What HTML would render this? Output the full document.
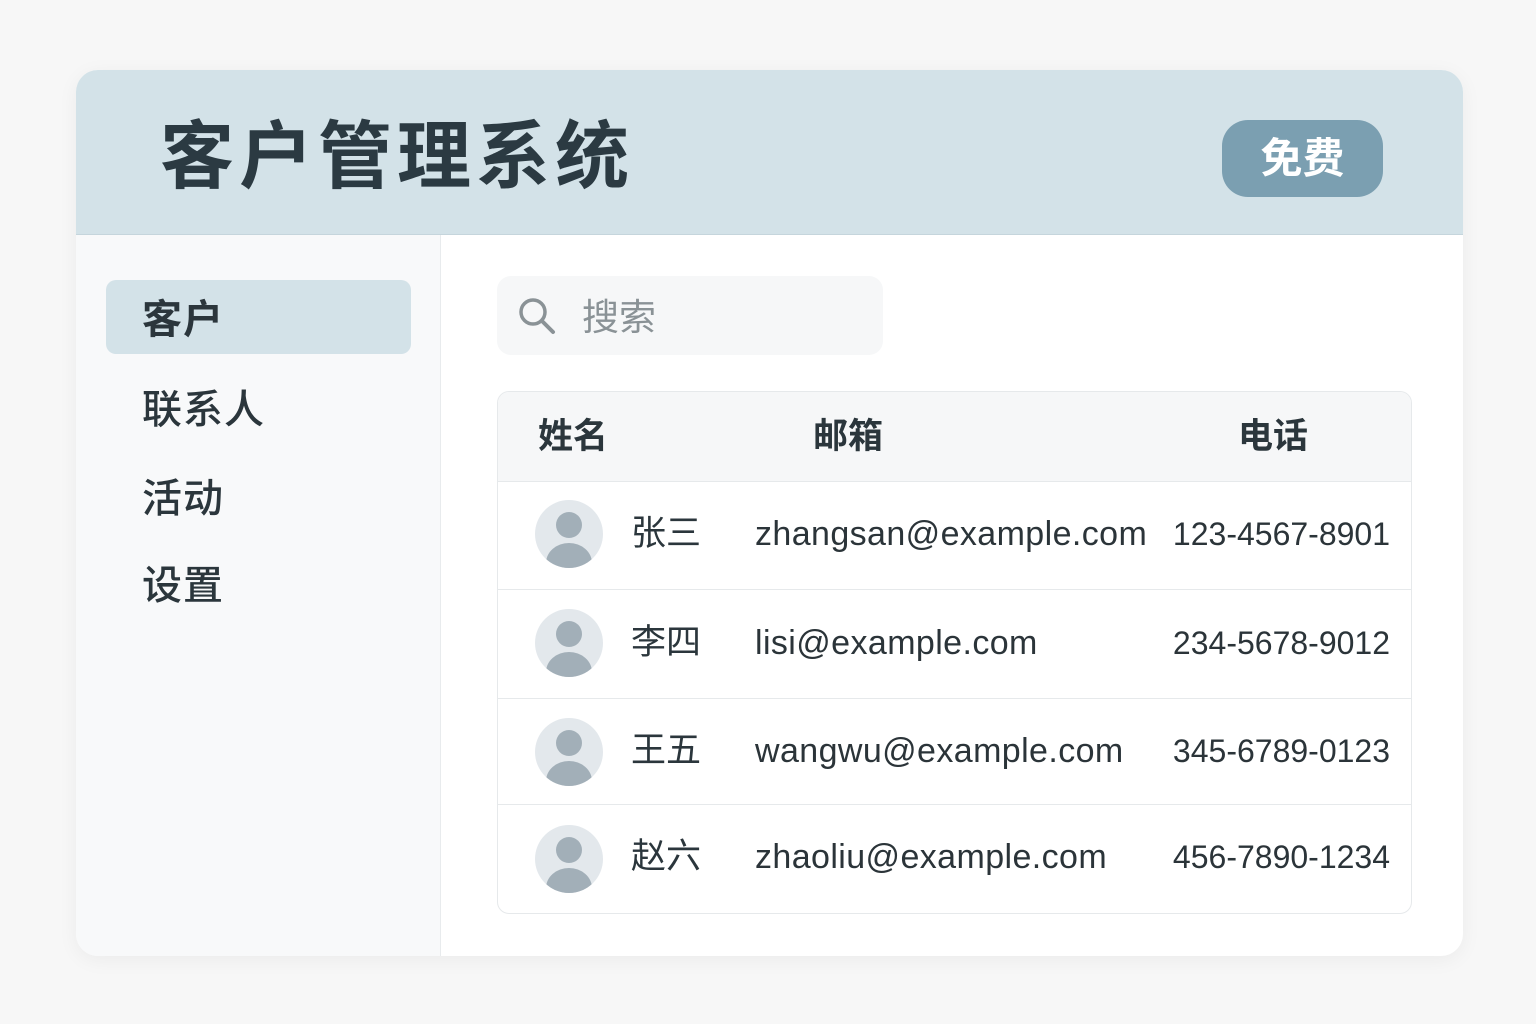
<!DOCTYPE html><html><head><meta charset="utf-8"><style>
*{margin:0;padding:0;box-sizing:border-box}
body{width:1536px;height:1024px;background:#f7f7f7;font-family:"Liberation Sans","Noto Sans CJK SC",sans-serif;position:relative;overflow:hidden;color:#2b363c}
.card{position:absolute;left:76px;top:70px;width:1387px;height:886px;background:#fff;border-radius:22px;overflow:hidden;box-shadow:0 4px 20px rgba(0,0,0,.05)}
.hdr{position:absolute;left:0;top:0;width:100%;height:165px;background:#d3e2e8;border-bottom:1px solid #c5d5dc}
.title{position:absolute;left:84px;top:42px;font-size:74px;font-weight:bold;color:#2b3a42;letter-spacing:5px;line-height:90px}
.badge{position:absolute;left:1146px;top:50px;width:161px;height:77px;border-radius:26px;background:#7b9fb1;color:#fff;font-size:42px;font-weight:bold;text-align:center;line-height:77px}
.side{position:absolute;left:0;top:165px;width:365px;height:721px;background:#f8f9fa;border-right:1px solid #e8ebed}
.it{position:absolute;left:30px;width:305px;height:74px;font-size:40px;line-height:80px;padding-left:36px;color:#2b363c;font-weight:500;letter-spacing:1px}
.act{background:#d3e2e8;border-radius:10px;font-weight:bold}
.search{position:absolute;left:497px;top:276px;width:386px;height:79px;background:#f6f7f8;border-radius:14px}
.search span{position:absolute;left:85px;top:20px;font-size:37px;color:#8a9296;line-height:44px}
.tbl{position:absolute;left:497px;top:391px;width:915px;height:523px;border:1px solid #e6e9eb;border-radius:12px;overflow:hidden;background:#fff}
.th{position:absolute;left:0;top:0;width:100%;height:89px;background:#f6f7f8}
.th span{position:absolute;top:22px;font-size:35px;font-weight:bold;line-height:46px;color:#2b363c}
.row{position:absolute;left:0;width:100%;border-top:1px solid #e6e9eb}
.av{position:absolute;left:37px;width:68px;height:68px;border-radius:50%;background:#e3e8ec;overflow:hidden}
.av:before{content:"";position:absolute;left:21px;top:12px;width:26px;height:26px;border-radius:50%;background:#a2afb8}
.av:after{content:"";position:absolute;left:11px;top:43px;width:46px;height:40px;border-radius:50%;background:#a2afb8}
.nm{position:absolute;left:133px;font-size:35px;line-height:40px}
.em{position:absolute;left:257px;font-size:34px;line-height:40px;color:#2b3439;letter-spacing:.4px}
.ph{position:absolute;right:21px;font-size:32px;line-height:40px;color:#2b3439}
</style></head><body>
<div class="card">
<div class="hdr"><div class="title">客户管理系统</div><div class="badge">免费</div></div>
<div class="side">
<div class="it act" style="top:45px">客户</div>
<div class="it" style="top:135px">联系人</div>
<div class="it" style="top:224px">活动</div>
<div class="it" style="top:311px">设置</div>
</div>
</div>
<div class="search"><svg style="position:absolute;left:20px;top:20px" width="40" height="40" viewBox="0 0 40 40"><circle cx="16" cy="16" r="12" fill="none" stroke="#8a9296" stroke-width="3.5"/><line x1="25" y1="25" x2="36" y2="36" stroke="#8a9296" stroke-width="4" stroke-linecap="round"/></svg><span>搜索</span></div>
<div class="tbl">
<div class="th"><span style="left:40px">姓名</span><span style="left:315px">邮箱</span><span style="left:740px">电话</span></div>
<div class="row" style="top:89px;height:108px"><div class="av" style="top:18px"></div><div class="nm" style="top:32px">张三</div><div class="em" style="top:32px">zhangsan@example.com</div><div class="ph" style="top:32px">123-4567-8901</div></div>
<div class="row" style="top:197px;height:109px"><div class="av" style="top:19px"></div><div class="nm" style="top:33px">李四</div><div class="em" style="top:33px">lisi@example.com</div><div class="ph" style="top:33px">234-5678-9012</div></div>
<div class="row" style="top:306px;height:106px"><div class="av" style="top:19px"></div><div class="nm" style="top:32px">王五</div><div class="em" style="top:32px">wangwu@example.com</div><div class="ph" style="top:32px">345-6789-0123</div></div>
<div class="row" style="top:412px;height:111px"><div class="av" style="top:20px"></div><div class="nm" style="top:32px">赵六</div><div class="em" style="top:32px">zhaoliu@example.com</div><div class="ph" style="top:32px">456-7890-1234</div></div>
</div>
</body></html>
